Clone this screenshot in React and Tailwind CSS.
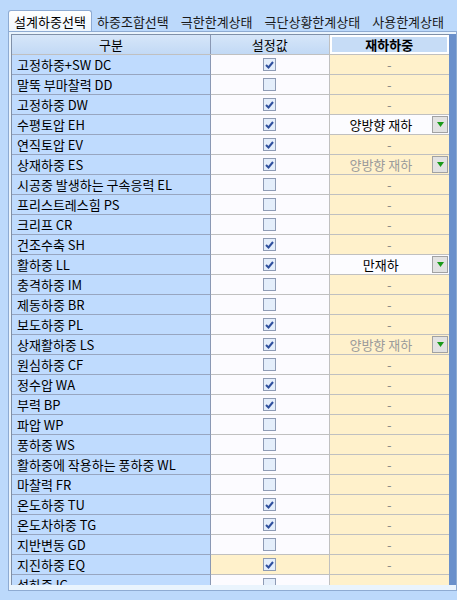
import React from 'react';

const rows = [
  { name: '고정하중+SW DC', on: true },
  { name: '말뚝 부마찰력 DD', on: false },
  { name: '고정하중 DW', on: true },
  { name: '수평토압 EH', on: true, drop: '양방향 재하' },
  { name: '연직토압 EV', on: true },
  { name: '상재하중 ES', on: true, drop: '양방향 재하', off: true },
  { name: '시공중 발생하는 구속응력 EL', on: false },
  { name: '프리스트레스힘 PS', on: false },
  { name: '크리프 CR', on: false },
  { name: '건조수축 SH', on: true },
  { name: '활하중 LL', on: true, drop: '만재하' },
  { name: '충격하중 IM', on: false },
  { name: '제동하중 BR', on: false },
  { name: '보도하중 PL', on: true },
  { name: '상재활하중 LS', on: true, drop: '양방향 재하', off: true },
  { name: '원심하중 CF', on: false },
  { name: '정수압 WA', on: true },
  { name: '부력 BP', on: true },
  { name: '파압 WP', on: false },
  { name: '풍하중 WS', on: false },
  { name: '활하중에 작용하는 풍하중 WL', on: false },
  { name: '마찰력 FR', on: false },
  { name: '온도하중 TU', on: true },
  { name: '온도차하중 TG', on: true },
  { name: '지반변동 GD', on: false },
  { name: '지진하중 EQ', on: true, sel: true },
  { name: '설하중 IC', on: false },
];

const tabs = ['하중조합선택', '극한한계상태', '극단상황한계상태', '사용한계상태'];

function Check({ on }) {
  return (
    <div className="w-[13px] h-[13px] border border-[#8e9bb5] bg-[#e4eefb] flex items-center justify-center">
      {on && (
        <svg width="9" height="8" viewBox="0 0 9 8">
          <path d="M1 4 L3.5 6.5 L8 1" fill="none" stroke="#2f4f9e" strokeWidth="2" />
        </svg>
      )}
    </div>
  );
}

function Drop({ text, off }) {
  return (
    <div className={`flex h-full w-full ${off ? 'bg-[#fff1cb]' : 'bg-[#fcfcff]'}`}>
      <div className={`flex-1 flex items-center justify-center ${off ? 'text-[#9a9a9a]' : 'text-black'}`}>{text}</div>
      <div className="w-[16px] my-[1px] mr-[1px] bg-[#e2e2e2] border border-[#a2a2a2] flex items-center justify-center">
        <svg width="7" height="5" viewBox="0 0 7 5">
          <path d="M0 0 H7 L3.5 5 Z" fill="#1a9a1a" />
        </svg>
      </div>
    </div>
  );
}

export default function App() {
  return (
    <div className="w-[457px] h-[600px] overflow-hidden bg-[#bcd9fb] pt-[10px] text-[13px] leading-none" style={{ fontFamily: '"Noto Sans CJK KR", "Noto Sans", sans-serif' }}>
      <div className="flex h-[21px] pl-[8px] items-end">
        <div className="h-[21px] w-[84px] flex items-center justify-center bg-gradient-to-b from-[#ffffff] to-[#eef5fd] border border-b-0 border-[#8eabd2] rounded-t-[3px] text-black">설계하중선택</div>
        <div className="h-[20px] pl-[5px] flex items-center gap-[12px] text-[#1a1a1a] whitespace-nowrap">
          {tabs.map((t) => (
            <span key={t}>{t}</span>
          ))}
        </div>
      </div>
      <div className="ml-[8px] h-[560px] border border-[#8eabd2] bg-[#eaf4fd] pl-[2px] pt-[2px] pb-[5px]">
        <div className="flex h-full overflow-hidden">
          <div className="flex-1 flex flex-col border-l border-t border-[#8090a8] overflow-hidden">
            <div className="flex h-[20px] shrink-0 border-b border-[#c0c0c0]">
              <div className="w-[200px] bg-gradient-to-b from-[#d6e6f9] to-[#c2d9f5] border-r border-[#8a98b4] flex items-center justify-center">구분</div>
              <div className="w-[119px] bg-gradient-to-b from-[#d6e6f9] to-[#c2d9f5] border-r border-[#c0c0c0] flex items-center justify-center">설정값</div>
              <div className="w-[120px] bg-[#c6dcf6] border-2 border-white flex items-center justify-center font-bold">재하하중</div>
            </div>
            {rows.map((r) => (
              <div key={r.name} className="flex h-[20px] shrink-0">
                <div className="w-[200px] bg-[#bfdbfe] border-r border-[#8a98b4] border-b border-b-[#97a5c0] flex items-center pl-[5px] text-black whitespace-nowrap">{r.name}</div>
                <div className={`w-[119px] border-r border-b border-[#c0c0c0] flex items-center justify-center ${r.sel ? 'bg-[#fff1cb]' : 'bg-[#fcfbff]'}`}>
                  <Check on={r.on} />
                </div>
                <div className="w-[120px] border-b border-[#c0c0c0] bg-[#fff1cb] flex items-center justify-center text-[#8a8a8a]">
                  {r.drop ? <Drop text={r.drop} off={r.off} /> : '-'}
                </div>
              </div>
            ))}
          </div>
          <div className="w-[7px] bg-[#6a90cb]" />
        </div>
      </div>
    </div>
  );
}
